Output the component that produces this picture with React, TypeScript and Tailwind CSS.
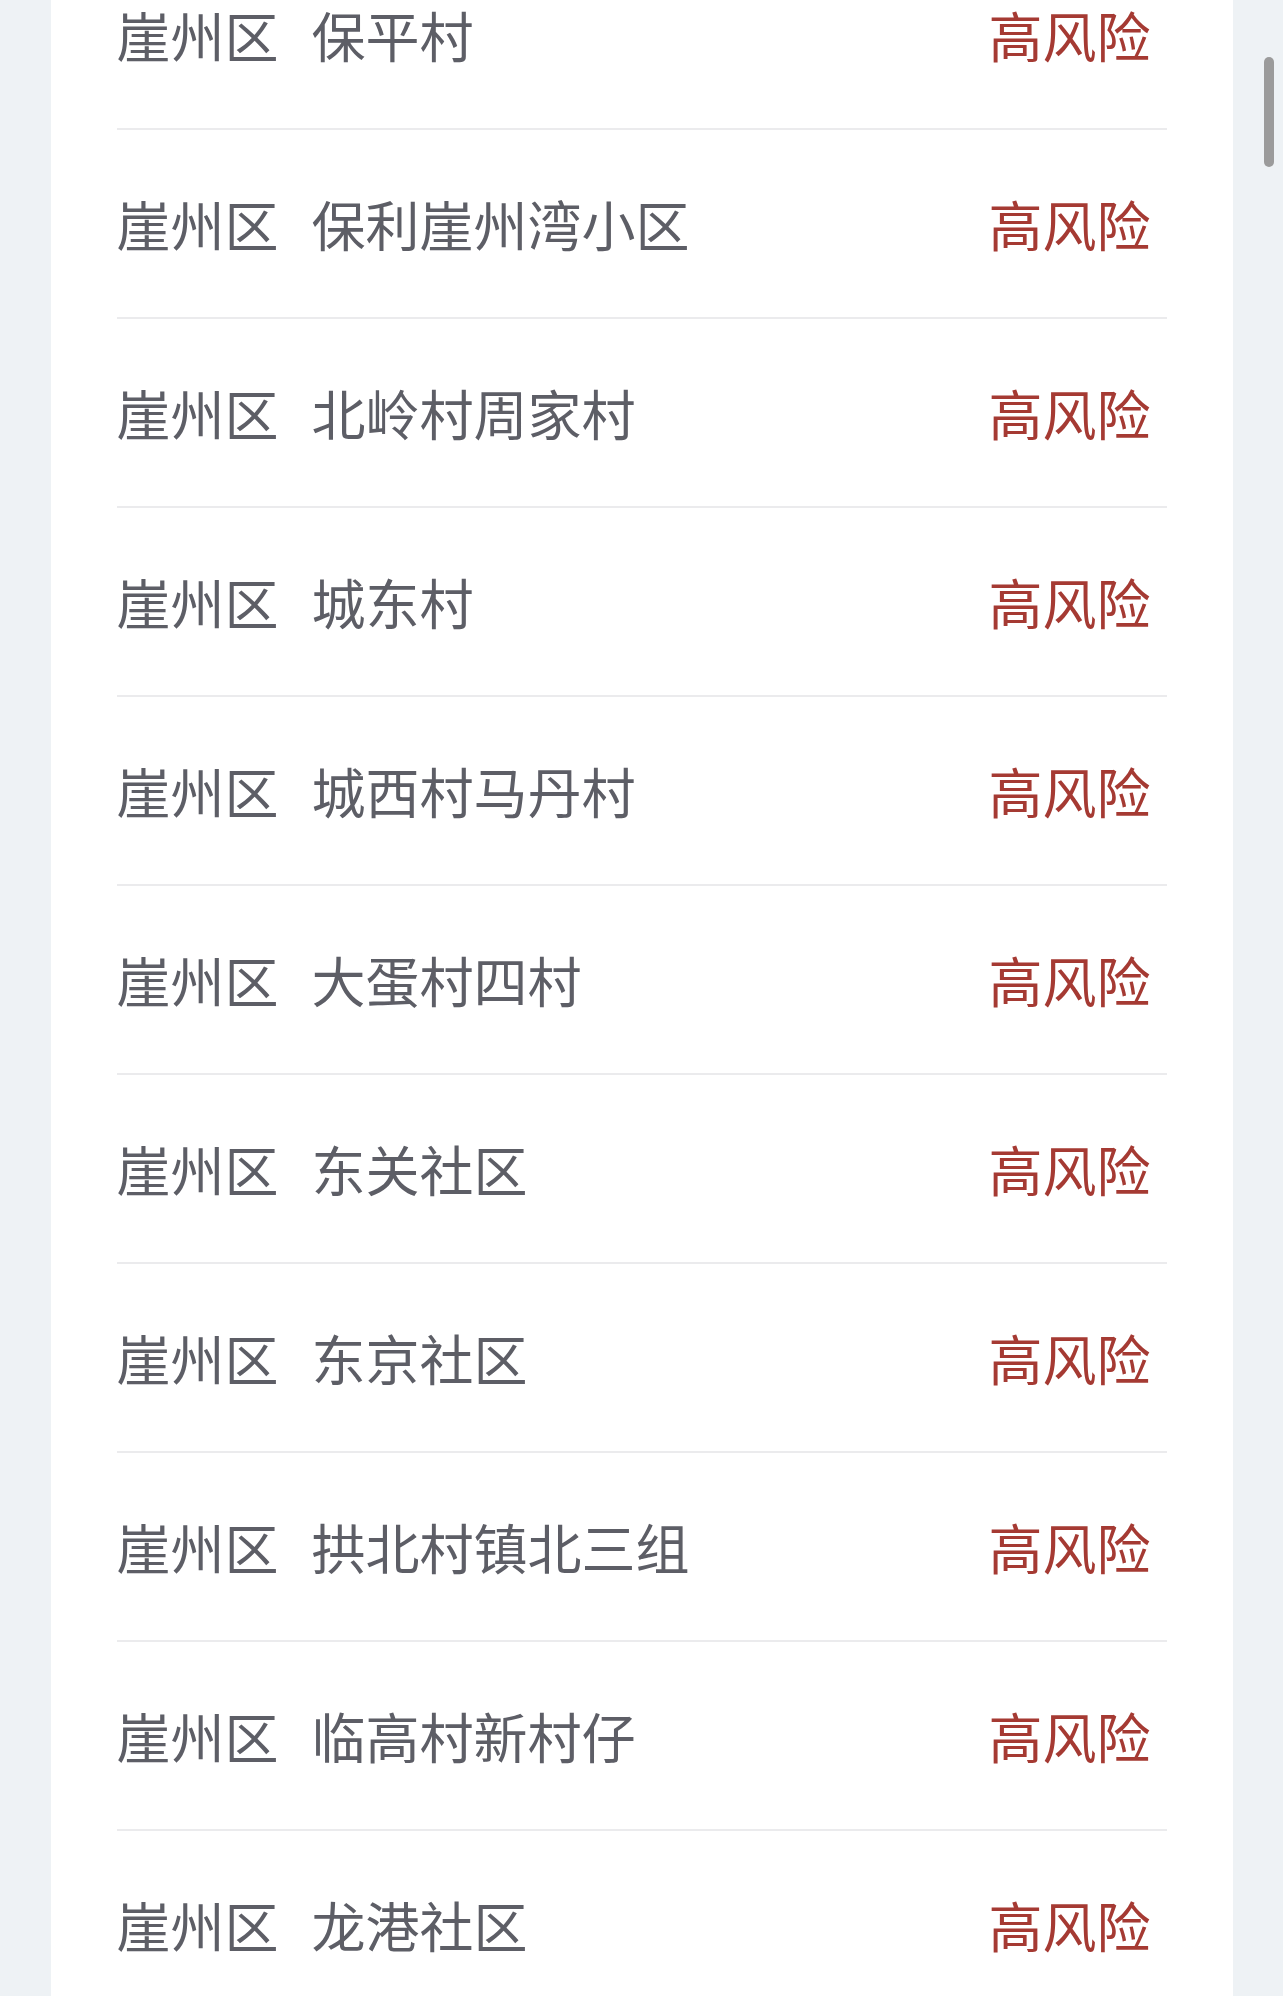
import React from "react";

const places = [
  "保平村",
  "保利崖州湾小区",
  "北岭村周家村",
  "城东村",
  "城西村马丹村",
  "大蛋村四村",
  "东关社区",
  "东京社区",
  "拱北村镇北三组",
  "临高村新村仔",
  "龙港社区",
];

export default function App() {
  return (
    <div
      className="min-h-[1996px] bg-[#eef2f5] flex justify-center overflow-hidden"
      style={{ fontFamily: '"Noto Sans CJK SC", "Noto Sans", sans-serif' }}
    >
      <div className="w-[1182px] bg-white px-[66px] h-[1996px] overflow-hidden">
        <div className="-mt-[59px]">
          {places.map((p) => (
            <div
              key={p}
              className="h-[189px] border-b-2 border-[#ebebed] flex items-center justify-between pb-[0px] pr-[16px]"
            >
              <div className="flex text-[54px] leading-none text-[#5d5e66]">
                <span>崖州区</span>
                <span className="ml-[33px]">{p}</span>
              </div>
              <span className="text-[54px] leading-none text-[#a53a33]">高风险</span>
            </div>
          ))}
        </div>
      </div>
      <div className="fixed right-[9px] top-[57px] w-[10px] h-[110px] rounded-full bg-[#9b9b9b]" />
    </div>
  );
}
